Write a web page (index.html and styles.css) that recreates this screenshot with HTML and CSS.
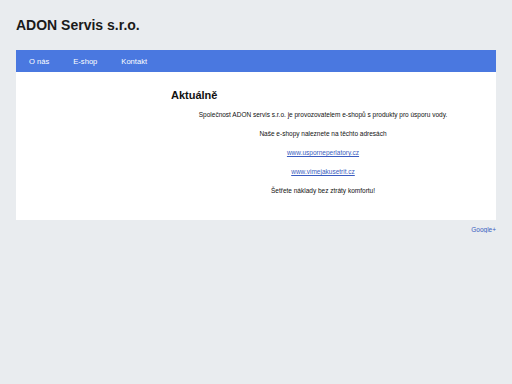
FILE: index.html
```html
<!DOCTYPE html>
<html lang="cs">
<head>
<meta charset="utf-8">
<title>ADON Servis s.r.o.</title>
<link rel="stylesheet" href="styles.css">
</head>
<body>
<div class="page">
  <header class="header">
    <h1 class="logo">ADON Servis s.r.o.</h1>
  </header>
  <nav class="nav">
    <a class="nav-link" href="#">O nás</a>
    <a class="nav-link" href="#">E-shop</a>
    <a class="nav-link" href="#">Kontakt</a>
  </nav>
  <main class="content">
    <aside class="sidebar"></aside>
    <section class="main">
      <h2 class="heading">Aktuálně</h2>
      <div class="text">
        <p>Společnost ADON servis s.r.o. je provozovatelem e-shopů s produkty pro úsporu vody.</p>
        <p>Naše e-shopy naleznete na těchto adresách</p>
        <p><a href="#">www.usporneperlatory.cz</a></p>
        <p><a href="#">www.vimejakusetrit.cz</a></p>
        <p>Šetřete náklady bez ztráty komfortu!</p>
      </div>
    </section>
  </main>
  <footer class="footer">
    <a href="#">Google+</a>
  </footer>
</div>
</body>
</html>
```
FILE: styles.css
```css
html, body {
  margin: 0;
  padding: 0;
}
body {
  background: #e9ecef;
  font-family: "Liberation Sans", Arial, sans-serif;
  color: #222;
}
.page {
  padding: 0 16px;
}
.header {
  height: 50px;
  display: flex;
  align-items: center;
}
.logo {
  margin: 0;
  font-size: 14px;
  font-weight: bold;
  color: #1a1a1a;
  padding-bottom: 1px;
}
.nav {
  background: #4a78e0;
  height: 22px;
  display: flex;
  align-items: center;
  padding-left: 1px;
}
.nav-link {
  color: #fff;
  text-decoration: none;
  font-size: 7.6px;
  padding: 0 12px;
}
.content {
  background: #fff;
  height: 148px;
  display: grid;
  grid-template-columns: 155px 1fr;
}
.main {
  padding: 17px 21px 0 0;
}
.heading {
  margin: 0;
  font-size: 11px;
  font-weight: bold;
  color: #111;
}
.text {
  text-align: center;
  font-size: 6.5px;
  padding-top: 10px;
  color: #111;
}
.text p {
  margin: 0 0 11px;
  line-height: 8px;
}
.text a {
  color: #3a5cc0;
}
.footer {
  text-align: right;
  font-size: 6.5px;
  padding-top: 6px;
}
.footer a {
  color: #3a5cc0;
}
```
